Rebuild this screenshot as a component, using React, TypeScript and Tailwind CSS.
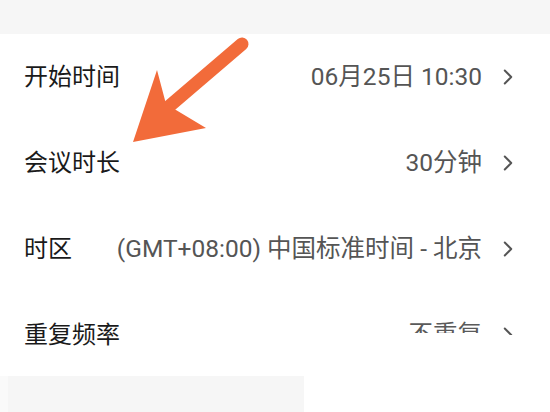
import { ChevronRight } from 'lucide-react'

type Row = { label: string; value: string; cut?: boolean }

const rows: Row[] = [
  { label: '开始时间', value: '06月25日 10:30' },
  { label: '会议时长', value: '30分钟' },
  { label: '时区', value: '(GMT+08:00) 中国标准时间 - 北京' },
  { label: '重复频率', value: '不重复', cut: true },
]

function Arrow() {
  return (
    <svg className="pointer-events-none absolute left-0 top-0" width="550" height="412" viewBox="0 0 550 412">
      <line x1="242" y1="44" x2="166" y2="109" stroke="#f26b3a" strokeWidth="13" strokeLinecap="round" />
      <polygon points="133,142 157,70 166,104 206,128" fill="#f26b3a" />
    </svg>
  )
}

export default function App() {
  return (
    <div
      className="relative h-[412px] w-[550px] overflow-hidden bg-white"
      style={{ fontFamily: 'Roboto, "Noto Sans CJK SC", sans-serif' }}
    >
      <div className="h-[34px] bg-[#f6f6f6]" />
      {rows.map((row) => (
        <div key={row.label} className="flex h-[86px] items-center pl-[24px] pr-[29px]">
          <span className="shrink-0 text-[24px] text-[#1a1a1a]">{row.label}</span>
          <div className="ml-auto flex items-center">
            {row.cut ? (
              <span className="relative text-[24.5px] text-[#5a5a5a]">
                {row.value}
                <span className="absolute inset-x-0 bottom-0 h-[55%] bg-white" />
              </span>
            ) : (
              <span className="text-[24.5px] text-[#555]">{row.value}</span>
            )}
            <span className="relative ml-[13px]">
              <ChevronRight className="size-[26px] text-[#555]" strokeWidth={1.8} />
              {row.cut && <span className="absolute inset-x-0 bottom-0 h-[50%] bg-white" />}
            </span>
          </div>
        </div>
      ))}
      <div className="mt-[-2px] flex">
        <div className="h-[40px] w-[8px] bg-[#fafafa]" />
        <div className="h-[40px] w-[296px] bg-[#f6f6f6]" />
      </div>
      <Arrow />
    </div>
  )
}
